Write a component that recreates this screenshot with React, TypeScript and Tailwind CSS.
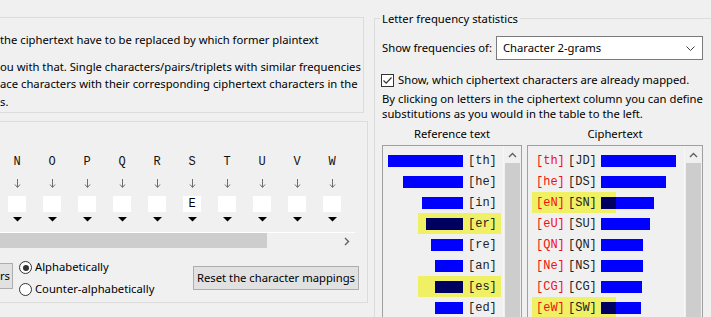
import React from "react";

const sans = "font-['Noto_Sans',sans-serif] text-[11.25px] text-black";
const mono = "font-['Liberation_Mono',monospace] text-[12px]";

const leftRows = [
  { t: "th", w: 75, hl: false },
  { t: "he", w: 60, hl: false },
  { t: "in", w: 41, hl: false },
  { t: "er", w: 37, hl: true },
  { t: "re", w: 32, hl: false },
  { t: "an", w: 28, hl: false },
  { t: "es", w: 28, hl: true },
  { t: "ed", w: 28, hl: false },
];

const rightRows = [
  { a: "th", b: "JD", w: 75, hl: false },
  { a: "he", b: "DS", w: 65, hl: false },
  { a: "eN", b: "SN", w: 53, hl: true },
  { a: "eU", b: "SU", w: 49, hl: false },
  { a: "QN", b: "QN", w: 42, hl: false },
  { a: "Ne", b: "NS", w: 42, hl: false },
  { a: "CG", b: "CG", w: 41, hl: false },
  { a: "eW", b: "SW", w: 40, hl: true },
];

const letters = ["N", "O", "P", "Q", "R", "S", "T", "U", "V", "W"];

function ChevronUp() {
  return (
    <svg width="9" height="6" viewBox="0 0 9 6">
      <path d="M1 5 L4.5 1.5 L8 5" fill="none" stroke="#606060" strokeWidth="1.4" />
    </svg>
  );
}

function VScroll() {
  return (
    <div className="w-[18px] shrink-0 flex flex-col border-l border-[#f7f7f7] bg-[#f0f0f0]">
      <div className="h-[17px] flex items-center justify-center">
        <ChevronUp />
      </div>
      <div className="mx-[1px] flex-1 bg-[#cdcdcd]" />
    </div>
  );
}

function DownArrow() {
  return (
    <svg width="7" height="9" viewBox="0 0 7 9">
      <path d="M3.5 0 V8" stroke="#6e6e6e" strokeWidth="1" />
      <path d="M1 5.5 L3.5 8.5 L6 5.5" fill="none" stroke="#6e6e6e" strokeWidth="1" />
    </svg>
  );
}

function Triangle() {
  return (
    <svg width="9" height="5" viewBox="0 0 9 5">
      <polygon points="0,0 9,0 4.5,4.5" fill="#000" />
    </svg>
  );
}

function Radio({ checked }: { checked: boolean }) {
  return (
    <div className="w-[13px] h-[13px] rounded-full border border-[#333] bg-white flex items-center justify-center shrink-0">
      {checked && <div className="w-[6px] h-[6px] rounded-full bg-[#333]" />}
    </div>
  );
}

export default function App() {
  return (
    <div className={`w-[711px] h-[317px] bg-[#f0f0f0] overflow-hidden flex ${sans}`}>
      {/* Left column */}
      <div className="w-[374px] shrink-0 flex flex-col">
        {/* Group box 1 */}
        <div className="mt-[17px] ml-[-20px] w-[384px] h-[96px] shrink-0 border border-[#dcdcdc] pl-[19px] pt-[13px] leading-[17.5px]">
          <div className="whitespace-nowrap">the ciphertext have to be replaced by which former plaintext</div>
          <div className="mt-[9px] whitespace-nowrap">ou with that. Single characters/pairs/triplets with similar frequencies</div>
          <div className="whitespace-nowrap">ace characters with their corresponding ciphertext characters in the</div>
          <div className="whitespace-nowrap">s.</div>
        </div>

        {/* Group box 2 */}
        <div className="mt-[8px] ml-[-20px] w-[388px] h-[182px] shrink-0 border border-[#dcdcdc] flex flex-col">
          <div className="ml-[19px] w-[355px] flex flex-col">
            <div className="pt-[33px] flex">
              {letters.map((l) => (
                <div key={l} className="w-[35px] shrink-0 pl-[8px] flex flex-col">
                  <div className={`w-[18px] h-[14px] flex items-center justify-center ${mono} text-[#111]`}>{l}</div>
                  <div className="w-[18px] h-[9px] mt-[10px] flex justify-center">
                    <DownArrow />
                  </div>
                  <div className={`w-[18px] h-[16px] mt-[8px] bg-white flex items-center justify-center ${mono}`}>
                    {l === "S" ? "E" : ""}
                  </div>
                  <div className="w-[18px] h-[5px] mt-[5px] flex justify-center">
                    <Triangle />
                  </div>
                </div>
              ))}
            </div>
            <div className="mt-[10px] h-[1px] bg-white" />
            <div className="h-[16px] flex items-center bg-[#f0f0f0]">
              <div className="w-[267px] h-[15px] self-start bg-[#cdcdcd]" />
              <div className="flex-1 flex justify-end pr-[5px]">
                <svg width="6" height="9" viewBox="0 0 6 9">
                  <path d="M1 1 L4.5 4.5 L1 8" fill="none" stroke="#606060" strokeWidth="1.4" />
                </svg>
              </div>
            </div>
          </div>
          {/* bottom row */}
          <div className="flex items-start">
            <div className="mt-[14px] w-[32px] h-[26px] border border-[#adadad] bg-[#e1e1e1] flex items-center justify-end pr-[2px]">
              rs
            </div>
            <div className="ml-[6px] mt-[12px] w-[174px] flex flex-col">
              <div className="flex items-center h-[13px]">
                <Radio checked />
                <span className="ml-[3px]">Alphabetically</span>
              </div>
              <div className="flex items-center h-[13px] mt-[9px]">
                <Radio checked={false} />
                <span className="ml-[3px]">Counter-alphabetically</span>
              </div>
            </div>
            <div className="mt-[17px] w-[166px] h-[24px] border border-[#adadad] bg-[#e1e1e1] flex items-center justify-center">
              Reset the character mappings
            </div>
          </div>
        </div>
      </div>

      {/* Right group box */}
      <div className="mt-[18px] w-[345px] h-[320px] shrink-0 border-l border-t border-[#dcdcdc] relative">
        <span className="absolute left-[5px] top-[-9px] px-[2px] bg-[#f0f0f0] leading-[17px]">Letter frequency statistics</span>
        <div className="pl-[7px] pt-[17px] flex flex-col">
          <div className="flex items-center">
            <div className="w-[114px]">Show frequencies of:</div>
            <div className="w-[207px] h-[24px] border border-[#7a7a7a] bg-white flex items-center pl-[6px] pr-[7px]">
              <span className="flex-1">Character 2-grams</span>
              <svg width="9" height="5" viewBox="0 0 9 5">
                <path d="M0.5 0.5 L4.5 4.5 L8.5 0.5" fill="none" stroke="#404040" strokeWidth="1" />
              </svg>
            </div>
          </div>
          <div className="mt-[14px] ml-[-1px] flex items-center h-[13px]">
            <div className="w-[13px] h-[13px] border border-[#333] bg-white flex items-center justify-center">
              <svg width="11" height="11" viewBox="0 0 11 11">
                <path d="M1.5 5.5 L4.2 8.2 L9.5 2.5" fill="none" stroke="#333" strokeWidth="1.2" />
              </svg>
            </div>
            <span className="ml-[4px] whitespace-nowrap">Show, which ciphertext characters are already mapped.</span>
          </div>
          <div className="mt-[4px] leading-[15px] whitespace-nowrap">
            <div>By clicking on letters in the ciphertext column you can define</div>
            <div>substitutions as you would in the table to the left.</div>
          </div>
          <div className="mt-[5px] h-[15px] flex leading-[15px]">
            <div className="w-[140px] text-center">Reference text</div>
            <div className="ml-[5px] w-[176px] text-center">Ciphertext</div>
          </div>
          <div className="mt-[4px] flex">
            {/* Left list */}
            <div className="w-[140px] h-[200px] border border-[#a0a0a0] flex">
              <div className="w-[120px] pt-[4px] flex flex-col">
                {leftRows.map((r) => (
                  <div key={r.t} className="relative h-[21px] flex items-center">
                    {r.hl && <div className="absolute left-[35px] top-0 w-[83px] h-[21px] bg-[#f0f064]" />}
                    <div className="relative w-[80px] flex justify-end">
                      <div className={`h-[12px] ${r.hl ? "bg-[#000060]" : "bg-[#0000ff]"}`} style={{ width: r.w }} />
                    </div>
                    <span className={`relative ml-[5px] ${mono} text-[#222]`}>[{r.t}]</span>
                  </div>
                ))}
              </div>
              <VScroll />
            </div>
            {/* Right list */}
            <div className="ml-[5px] w-[176px] h-[200px] border border-[#a0a0a0] flex">
              <div className="w-[156px] pt-[4px] flex flex-col">
                {rightRows.map((r) => {
                  const dark = r.hl ? Math.min(r.w, 15) : 0;
                  return (
                    <div key={r.a} className="relative h-[21px] flex items-center">
                      {r.hl && <div className="absolute left-[4px] top-0 w-[84px] h-[21px] bg-[#f0f064]" />}
                      <span className={`relative ml-[8px] w-[32px] ${mono} text-[#f01010]`}>[{r.a}]</span>
                      <span className={`relative w-[33px] ${mono} text-[#222]`}>[{r.b}]</span>
                      <div className="relative flex h-[12px]">
                        {dark > 0 && <div className="h-[12px] bg-[#000060]" style={{ width: dark }} />}
                        <div className="h-[12px] bg-[#0000ff]" style={{ width: r.w - dark }} />
                      </div>
                    </div>
                  );
                })}
              </div>
              <VScroll />
            </div>
          </div>
        </div>
      </div>
    </div>
  );
}
